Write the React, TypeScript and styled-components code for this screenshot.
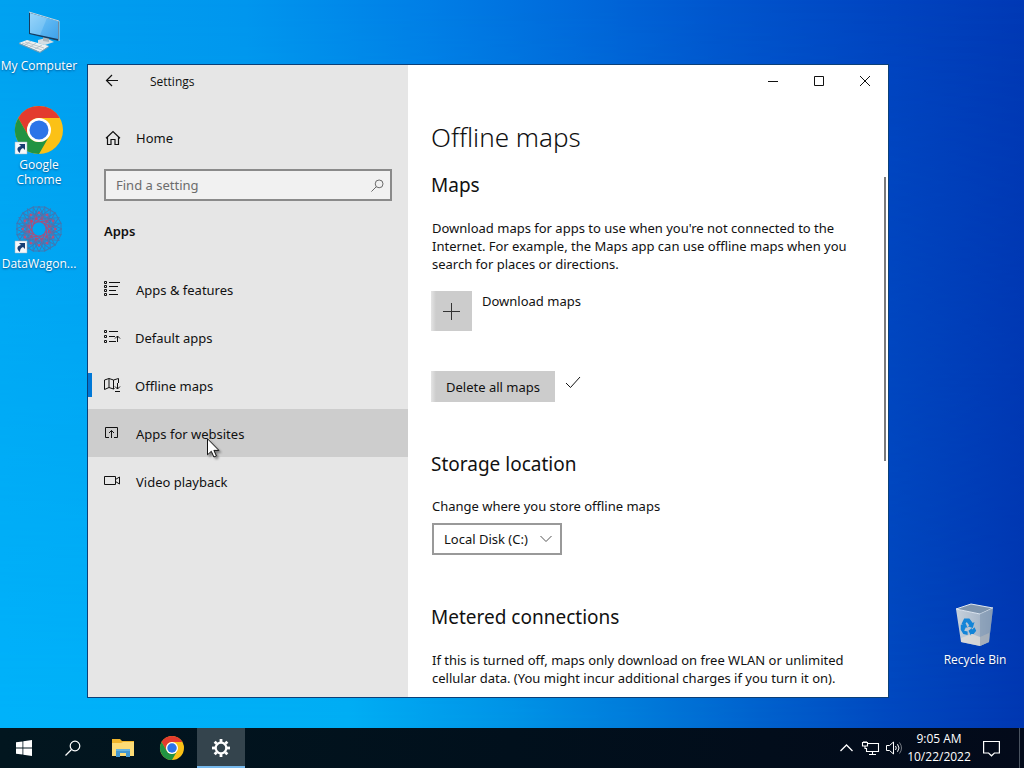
import React from "react";
import styled, { createGlobalStyle } from "styled-components";

const GlobalStyle = createGlobalStyle`
  *, *::before, *::after { box-sizing: border-box; }
  html, body, #root { height: 100%; margin: 0; }
  body { overflow: hidden; font-family: "Noto Sans", "Open Sans", sans-serif; font-size: 13px; color: #111; }
  button, input, select { font: inherit; color: inherit; margin: 0; border-radius: 0; }
  h1, h2, p { margin: 0; }
  svg { display: block; flex: none; overflow: visible; }
`;

const Screen = styled.div`
  display: flex;
  flex-direction: column;
  height: 100%;
`;

const Desktop = styled.main`
  position: relative;
  isolation: isolate;
  flex: 1;
  min-height: 0;
  background: linear-gradient(90deg, #00a2f0 0%, #0096ee 24%, #007ee6 42%, #006adb 56%, #0056ce 70%, #0046c2 85%, #0039b5 100%);

  &::before {
    content: "";
    position: absolute;
    inset: 0;
    z-index: -1;
    background: linear-gradient(90deg, #00b2fa 0%, #00aef4 34%, #0094e6 50%, #0078d8 64%, #005ecb 76%, #0048bf 87%, #0037b1 100%);
    mask-image: linear-gradient(transparent, #000);
  }
`;

const IconGrid = styled.div`
  display: grid;
  grid-template-columns: 78px 1fr 76px;
  grid-auto-rows: 99px;
  padding: 8px 11px 0 0;
`;

const Shortcut = styled.a<{ $col?: number; $row?: number }>`
  grid-column: ${(p) => p.$col ?? 1};
  grid-row: ${(p) => p.$row ?? "auto"};
  display: flex;
  flex-direction: column;
  align-items: center;
  gap: 2px;
  color: #fff;
  font-family: "Open Sans", sans-serif;
  font-size: 12px;
  line-height: 15px;
  text-align: center;
  text-decoration: none;
  text-shadow: 0 1px 2px rgba(0, 30, 80, 0.6);
`;

const Window = styled.section`
  position: absolute;
  inset: 65px 136px 31px 88px;
  display: flex;
  background: #fff;
  box-shadow: 0 0 0 1px #0b3f78;
`;

const Sidebar = styled.aside`
  width: 320px;
  flex: none;
  background: #e6e6e6;
`;

const WindowHeader = styled.header`
  display: flex;
  align-items: center;
  height: 32px;
  font-family: "Open Sans", sans-serif;
  font-size: 12px;
`;

const BackButton = styled.button`
  display: grid;
  place-items: center;
  width: 48px;
  height: 32px;
  margin-right: 14px;
  padding: 0;
  border: 0;
  background: none;
`;

const Nav = styled.nav`
  display: flex;
  flex-direction: column;
`;

const NavLink = styled.a<{ $hover?: boolean; $current?: boolean }>`
  display: flex;
  align-items: center;
  gap: 15px;
  height: 48px;
  padding: 1px 0 0 16px;
  color: inherit;
  text-decoration: none;
  background: ${(p) =>
    p.$hover
      ? "#cdcdcd"
      : p.$current
        ? "linear-gradient(#0078d7, #0078d7) 0 50% / 4px 24px no-repeat"
        : "none"};
`;

const HomeLink = styled(NavLink)`
  margin-top: 16px;
`;

const SearchBox = styled.label`
  display: flex;
  align-items: center;
  height: 32px;
  margin: 8px 16px 0;
  padding: 0 6px 0 10px;
  border: 2px solid #8a8a8a;
  background: #f1f1f1;
  color: #666;
`;

const SearchInput = styled.input`
  flex: 1;
  min-width: 0;
  padding: 0;
  border: 0;
  outline: 0;
  background: none;
  &::placeholder { color: #6c6c6c; opacity: 1; }
`;

const GroupTitle = styled.h2`
  margin: 20px 16px 24px;
  font-size: 13px;
  line-height: 20px;
  font-weight: 600;
`;

const Content = styled.div`
  position: relative;
  flex: 1;
  min-width: 0;
  display: flex;
  flex-direction: column;
`;

const Controls = styled.header`
  display: flex;
  justify-content: flex-end;
  flex: none;
`;

const ControlButton = styled.button`
  display: grid;
  place-items: center;
  width: 46px;
  height: 32px;
  padding: 0;
  border: 0;
  background: none;
`;

const Page = styled.div`
  flex: 1;
  min-height: 0;
  overflow: hidden;
  padding: 20px 30px 0 23px;
`;

const Title = styled.h1`
  margin-bottom: 14px;
  font-size: 26px;
  line-height: 40px;
  font-weight: 300;
`;

const Heading = styled.h2`
  font-size: 19px;
  line-height: 28px;
  font-weight: 400;
`;

const Text = styled.p`
  margin-top: 20px;
  padding-left: 1px;
  line-height: 18px;
`;

const AddRow = styled.div`
  display: flex;
  gap: 10px;
  margin-top: 18px;
  line-height: 20px;
`;

const GreyButton = styled.button`
  display: grid;
  place-items: center;
  height: 31px;
  padding: 0 15px;
  border: 0;
  background: linear-gradient(90deg, #e4e4e4, #cccccc 5px);
`;

const AddButton = styled(GreyButton)`
  width: 41px;
  height: 40px;
  padding: 0;
`;

const DeleteRow = styled.div`
  display: flex;
  gap: 10px;
  margin: 40px 0 48px;
`;

const CheckMark = styled.svg`
  margin-top: 4px;
`;

const FieldLabel = styled.label`
  display: block;
  margin-top: 18px;
  padding-left: 1px;
  line-height: 20px;
`;

const SelectBox = styled.div`
  position: relative;
  width: 130px;
  margin: 7px 1px 48px;
`;

const Select = styled.select`
  appearance: none;
  width: 100%;
  height: 32px;
  padding: 0 28px 0 10px;
  border: 2px solid #999;
  background: #fff;
`;

const Chevron = styled.svg`
  position: absolute;
  right: 10px;
  top: 12px;
  pointer-events: none;
`;

const ScrollThumb = styled.div`
  position: absolute;
  right: 2px;
  top: 112px;
  width: 2px;
  height: 45%;
  background: #7a7a7a;
`;

const Pointer = styled.svg`
  position: absolute;
  left: 207px;
  top: 438px;
  pointer-events: none;
  filter: drop-shadow(2px 2px 1px rgba(0, 0, 0, 0.4));
`;

const Taskbar = styled.footer`
  display: flex;
  align-items: stretch;
  flex: none;
  height: 40px;
  color: #fff;
  background: linear-gradient(90deg, #02161f, #01101c 50%, #030a1a);
`;

const TaskButton = styled.button<{ $active?: boolean }>`
  display: grid;
  place-items: center;
  width: 48px;
  margin-right: 1px;
  padding: 0;
  border: 0;
  background: ${(p) => (p.$active ? "#34444d" : "none")};
  box-shadow: ${(p) => (p.$active ? "inset 0 -2px #76b9ed" : "none")};
`;

const StartGroup = styled.div`
  display: flex;
  margin-right: 1px;
`;

const Tray = styled.div`
  display: flex;
  align-items: center;
  margin-left: auto;
`;

const TrayButton = styled.button<{ $width?: number }>`
  display: grid;
  place-items: center;
  width: ${(p) => p.$width ?? 24}px;
  height: 100%;
  padding: 0;
  border: 0;
  background: none;
`;

const Clock = styled.time`
  width: 66px;
  font-family: "Open Sans", sans-serif;
  font-size: 12px;
  line-height: 18px;
  text-align: center;
`;

const ShowDesktop = styled.button`
  width: 5px;
  height: 100%;
  margin-left: 9px;
  padding: 0;
  border: 0;
  border-left: 1px solid #4a5360;
  background: none;
`;

const line = { fill: "none", stroke: "currentColor" } as const;

function ComputerIcon() {
  return (
    <svg width="48" height="48" viewBox="5 0 48 48">
      <defs>
        <linearGradient id="screen" x1="0" y1="0" x2="1" y2="1">
          <stop offset="0" stopColor="#8fd0f8" />
          <stop offset=".5" stopColor="#5cb6f2" />
          <stop offset="1" stopColor="#3fa2ea" />
        </linearGradient>
      </defs>
      <path d="M28 32l8-2 8 4-9 3-7-2z" fill="#d4dde2" />
      <path d="M33 29l6 1v4l-6-1z" fill="#aab8c0" />
      <path d="M19 4l30 9v20l-30-7z" fill="#163c60" />
      <path d="M20 5l28 8v18l-28-6z" fill="url(#screen)" />
      <path d="M20 5l17 5-7 17-10-2z" fill="#b4e0fb" opacity=".3" />
      <path d="M19 4l30 9v20" fill="none" stroke="#c6dbe7" />
      <path d="M9 35l8-3 22 6-9 6z" fill="#edf0f0" />
      <path d="M9 35l21 9 9-6v1l-9 6-21-9z" fill="#889da9" />
      <path d="M12 35l20 7M15 34l19 6M15 37l6-4M20 39l6-4M25 41l7-4" fill="none" stroke="#a6b6be" strokeWidth=".7" />
    </svg>
  );
}

function ChromeMark({ size }: { size: number }) {
  return (
    <svg width={size} height={size} viewBox="0 0 48 48">
      <circle cx="24" cy="24" r="24" fill="#fbc116" />
      <path d="M3.2 12A24 24 0 0 1 44.8 12H24a12 12 0 0 0-10.4 18z" fill="#e33b2e" />
      <path d="M3.2 12A24 24 0 0 0 24 48l10.4-18a12 12 0 0 1-20.8 0z" fill="#229342" />
      <circle cx="24" cy="24" r="12" fill="#fff" />
      <circle cx="24" cy="24" r="9.5" fill="#2b74e8" />
    </svg>
  );
}

function LinkBadge() {
  return (
    <g>
      <path d="M0 36h12v12H0z" fill="#f5f7fa" stroke="#9fb4c4" strokeWidth=".5" />
      <path d="M4 38h6v6l-2-2c-2 1-3 2-3 5-4-3-3-6 1-7z" fill="#183d72" />
    </g>
  );
}

function ChromeShortcutIcon() {
  return (
    <svg width="48" height="48" viewBox="0 1 48 48">
      <ChromeMark size={48} />
      <LinkBadge />
    </svg>
  );
}

const petals = [0, 30, 60, 90, 120, 150, 180, 210, 240, 270, 300, 330];

function WagonIcon() {
  return (
    <svg width="48" height="48" viewBox="0 1 48 48">
      <g transform="translate(24 24)" fill="none">
        {petals.map((a) => (
          <g key={a} transform={`rotate(${a})`}>
            <path d="M-5-12L0-23L5-12M-6-22L0-12L6-22z" stroke="#3f78b4" strokeWidth="1" />
            <path d="M-8-7L0-18L8-7" stroke="#6a6aa0" strokeWidth="1" />
            <path d="M-5-5L4-12" stroke="#9c5484" strokeWidth="1.4" />
            <circle cx="0" cy="-16" r="1.3" fill="#b8507c" />
            <circle cx="3" cy="-10" r="1.4" fill="#c8426a" />
          </g>
        ))}
      </g>
      <LinkBadge />
    </svg>
  );
}

function RecycleIcon() {
  return (
    <svg width="48" height="48" viewBox="0 0 48 48">
      <defs>
        <linearGradient id="bin" x1="0" x2="1" y1="0" y2="0">
          <stop offset="0" stopColor="#c6d1dc" />
          <stop offset=".6" stopColor="#abbacb" />
          <stop offset="1" stopColor="#8a9eb8" />
        </linearGradient>
      </defs>
      <path d="M5 7l24 5 13-6-4 34-9 4-19-4z" fill="url(#bin)" />
      <path d="M5 7l15-5 22 4-13 6z" fill="#7f95ad" stroke="#dfe7ef" />
      <path d="M29 12v32l9-4 4-34z" fill="#8299b3" opacity=".65" />
      <path d="M10 36l11-4 8 3v9l-19-4z" fill="#e1ded8" opacity=".75" />
      <path d="M29 35l9-4v9l-9 4z" fill="#b5b9bd" opacity=".6" />
      <g fill="#1385d8" transform="translate(2 2) scale(.86)">
        <path d="M13 17l6 0 4 5 2-1-2 7-6-2 2-1-3-4-3 4-3-2z" />
        <path d="M9 24l6-1 2 5-2-1-2 4 4 1v4l-5-1-3-5z" />
        <path d="M18 31l4-3v2l3-3 2 4-3 4-3 0v2z" />
      </g>
    </svg>
  );
}

function HomeIcon() {
  return (
    <svg width="17" height="16" viewBox="0 0 17 16" {...line} strokeWidth="1.2">
      <path d="M2 8.2L9 1.5l7 6.7M3.5 7v7.5h3.5v-5h4v5h3.5V7" />
    </svg>
  );
}

function FeaturesIcon() {
  return (
    <svg width="17" height="17" viewBox="0 0 17 17" {...line}>
      <path d="M.5.5h2v2h-2zM.5 4.5h2v2h-2zM.5 8.5h2v2h-2zM.5 12.5h2v2h-2zM5 1.5h11M5 5.5h9M5 9.5h7M5 13.5h9" />
    </svg>
  );
}

function DefaultsIcon() {
  return (
    <svg width="16" height="17" viewBox="0 0 16 17" {...line}>
      <path d="M.5 1.5h2v2h-2zM.5 6.5h2v2h-2zM.5 11.5h2v2h-2zM5 2.5h9M5 7.5h6M5 12.5h7M13.5 13V7M11 9.5L13.5 7l2.5 2.5" />
    </svg>
  );
}

function MapIcon() {
  return (
    <svg width="16" height="17" viewBox="0 0 16 17" {...line}>
      <path d="M10.5 11.5L9.5 12 5 10.5.5 12.5V3L5 1.5 9.5 3 14.5 1.5V6M5 1.5v9M9.5 3v9M13.5 6v6M11 9.5l2.5 2.5L16 9.5M11 14.5h5" />
    </svg>
  );
}

function WebsitesIcon() {
  return (
    <svg width="17" height="17" viewBox="0 0 17 17" {...line}>
      <path d="M5 12.5H1.5v-10h12v10H10M7.5 13V5.5M5 8l2.5-2.5L10 8" />
    </svg>
  );
}

function VideoIcon() {
  return (
    <svg width="17" height="17" viewBox="0 0 17 17" {...line}>
      <path d="M.5 3.5h11v8H.5zM11.5 6.5l4-2.5v7l-4-2.5" />
    </svg>
  );
}

function SearchIcon({ size }: { size: number }) {
  return (
    <svg width={size} height={size} viewBox="0 0 16 16" {...line} strokeWidth="1.2">
      <circle cx="10" cy="6" r="4.8" />
      <path d="M6.5 9.5L.5 15.5" />
    </svg>
  );
}

function GearIcon() {
  return (
    <svg width="18" height="18" viewBox="-9 -9 18 18" fill="none" stroke="#fff">
      <circle r="5.3" strokeWidth="2.2" />
      {[0, 45, 90, 135, 180, 225, 270, 315].map((a) => (
        <path key={a} d="M0-6v-3" strokeWidth="2.8" transform={`rotate(${a})`} />
      ))}
    </svg>
  );
}

function FolderIcon() {
  return (
    <svg width="22" height="18" viewBox="0 0 22 18">
      <path d="M0 0h8l2 2h12v15H0z" fill="#f0b52c" />
      <path d="M0 4h9l2-1h11v14H0z" fill="#fddc76" />
      <path d="M4 10h14v8h-4v-4H8v4H4z" fill="#4397cf" />
      <path d="M4 10h14v2H4z" fill="#65b3df" />
    </svg>
  );
}

const navItems = [
  { label: "Apps & features", icon: <FeaturesIcon /> },
  { label: "Default apps", icon: <DefaultsIcon /> },
  { label: "Offline maps", icon: <MapIcon />, current: true },
  { label: "Apps for websites", icon: <WebsitesIcon />, hover: true },
  { label: "Video playback", icon: <VideoIcon /> },
];

export default function App() {
  return (
    <Screen>
      <GlobalStyle />
      <Desktop>
        <IconGrid>
          <Shortcut href="#computer"><ComputerIcon />My Computer</Shortcut>
          <Shortcut href="#chrome"><ChromeShortcutIcon />Google<br />Chrome</Shortcut>
          <Shortcut href="#datawagon"><WagonIcon />DataWagon...</Shortcut>
          <Shortcut href="#recycle" $col={3} $row={7}><RecycleIcon />Recycle Bin</Shortcut>
        </IconGrid>

        <Window aria-label="Settings">
          <Sidebar>
            <WindowHeader>
              <BackButton aria-label="Back">
                <svg width="14" height="14" viewBox="0 0 14 14" {...line} strokeWidth="1.2">
                  <path d="M13 6.5H1.5M7 1L1.5 6.5 7 12" />
                </svg>
              </BackButton>
              Settings
            </WindowHeader>
            <HomeLink href="#home"><HomeIcon />Home</HomeLink>
            <SearchBox>
              <SearchInput type="text" placeholder="Find a setting" aria-label="Find a setting" />
              <SearchIcon size={13} />
            </SearchBox>
            <GroupTitle>Apps</GroupTitle>
            <Nav>
              {navItems.map((item) => (
                <NavLink key={item.label} href="#page" $current={item.current} $hover={item.hover}>
                  {item.icon}
                  {item.label}
                </NavLink>
              ))}
            </Nav>
          </Sidebar>

          <Content>
            <Controls>
              <ControlButton aria-label="Minimize">
                <svg width="11" height="11" {...line}><path d="M0 5.5h10" /></svg>
              </ControlButton>
              <ControlButton aria-label="Maximize">
                <svg width="10" height="10" {...line}><path d="M.5.5h9v9h-9z" /></svg>
              </ControlButton>
              <ControlButton aria-label="Close">
                <svg width="11" height="11" {...line}><path d="M0 0l10 10M10 0L0 10" /></svg>
              </ControlButton>
            </Controls>
            <Page>
              <Title>Offline maps</Title>
              <Heading>Maps</Heading>
              <Text>
                Download maps for apps to use when you're not connected to the Internet. For
                example, the Maps app can use offline maps when you search for places or directions.
              </Text>
              <AddRow>
                <AddButton aria-label="Download maps">
                  <svg width="17" height="17" fill="none" stroke="#333"><path d="M0 8.5h17M8.5 0v17" /></svg>
                </AddButton>
                Download maps
              </AddRow>
              <DeleteRow>
                <GreyButton>Delete all maps</GreyButton>
                <CheckMark width="16" height="14" {...line}>
                  <path d="M1 8l4.5 4.5L15 2" />
                </CheckMark>
              </DeleteRow>
              <Heading>Storage location</Heading>
              <FieldLabel htmlFor="storage">Change where you store offline maps</FieldLabel>
              <SelectBox>
                <Select id="storage"><option>Local Disk (C:)</option></Select>
                <Chevron width="12" height="8" fill="none" stroke="#555"><path d="M.5 1L6 6.5 11.5 1" /></Chevron>
              </SelectBox>
              <Heading>Metered connections</Heading>
              <Text>
                If this is turned off, maps only download on free WLAN or unlimited cellular data.
                (You might incur additional charges if you turn it on).
              </Text>
            </Page>
            <ScrollThumb />
          </Content>
        </Window>

        <Pointer width="13" height="20" viewBox="0 0 13 20">
          <path d="M.5.8v16l3.8-3.5 2.6 5.7 2.5-1.1-2.5-5.5h5z" fill="#fff" stroke="#111" />
        </Pointer>
      </Desktop>

      <Taskbar>
        <StartGroup>
          <TaskButton aria-label="Start">
            <svg width="16" height="16" viewBox="0 0 16 16" fill="#fff">
              <path d="M0 2.3L6.5 1.4v6.2H0zM7.3 1.3L16 0v7.6H7.3zM0 8.4h6.5v6.2L0 13.7zM7.3 8.4H16V16l-8.7-1.3z" />
            </svg>
          </TaskButton>
          <TaskButton aria-label="Search"><SearchIcon size={16} /></TaskButton>
        </StartGroup>
        <TaskButton aria-label="File Explorer"><FolderIcon /></TaskButton>
        <TaskButton aria-label="Google Chrome"><ChromeMark size={24} /></TaskButton>
        <TaskButton aria-label="Settings" $active><GearIcon /></TaskButton>
        <Tray>
          <TrayButton aria-label="Show hidden icons">
            <svg width="13" height="8" {...line} strokeWidth="1.3"><path d="M.5 7l6-6 6 6" /></svg>
          </TrayButton>
          <TrayButton aria-label="Network">
            <svg width="17" height="15" viewBox="0 0 17 15" {...line} strokeWidth="1.1">
              <path d="M6 2.5h10.5v8H4.5V7M10.5 10.5v3M7 13.5h7M.5 1.5h5v3.5h-5zM3 5v2.5h2M2 0v1.5M4 0v1.5" />
            </svg>
          </TrayButton>
          <TrayButton aria-label="Volume">
            <svg width="16" height="14" viewBox="0 0 16 14" {...line}>
              <path d="M.5 4.5h3L7.5 1v12L3.5 9.5h-3zM9.5 5q1.5 2 0 4M11.5 3.2q3 3.8 0 7.6" />
              <path d="M13.5 1.5q4 5.5 0 11" opacity=".45" />
            </svg>
          </TrayButton>
          <Clock>9:05 AM<br />10/22/2022</Clock>
          <TrayButton aria-label="Notifications" $width={38}>
            <svg width="17" height="17" viewBox="0 0 17 17" {...line} strokeWidth="1.2">
              <path d="M.6 1.5h15.8v11.5h-5l-2.9 2.8-2.9-2.8h-5z" />
            </svg>
          </TrayButton>
          <ShowDesktop aria-label="Show desktop" />
        </Tray>
      </Taskbar>
    </Screen>
  );
}
